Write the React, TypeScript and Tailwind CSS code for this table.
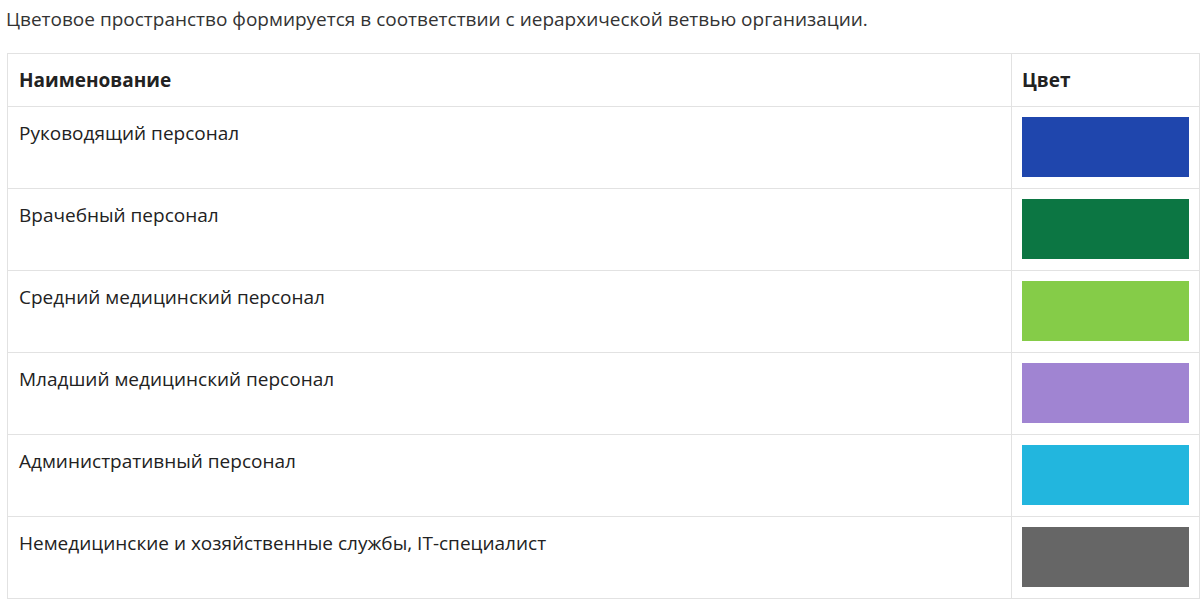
const rows = [
  { name: 'Руководящий персонал', color: 'bg-[#1f46ad]' },
  { name: 'Врачебный персонал', color: 'bg-[#0c7643]' },
  { name: 'Средний медицинский персонал', color: 'bg-[#85cc48]' },
  { name: 'Младший медицинский персонал', color: 'bg-[#a084d2]' },
  { name: 'Административный персонал', color: 'bg-[#22b6de]' },
  { name: 'Немедицинские и хозяйственные службы, IT-специалист', color: 'bg-[#666666]' },
];

export default function App() {
  return (
    <div className="w-[1200px] h-[600px] bg-white pl-[6px] pt-[7px] text-[#222] font-['Open_Sans',sans-serif] overflow-hidden">
      <p className="h-[46px] text-[19px] leading-[24px] text-[#333]">
        Цветовое пространство формируется в соответствии с иерархической ветвью организации.
      </p>
      <div className="ml-px grid grid-cols-[1004px_188px] border-t border-l border-[#e2e2e2]">
        <div className="h-[53px] flex items-center px-[11px] border-r border-b border-[#e2e2e2] text-[19px] font-bold">
          Наименование
        </div>
        <div className="h-[53px] flex items-center px-[10px] border-r border-b border-[#e2e2e2] text-[19px] font-bold">
          Цвет
        </div>
        {rows.map((r) => (
          <div key={r.name} className="contents">
            <div className="h-[82px] px-[11px] pt-[13px] border-r border-b border-[#e2e2e2] text-[19px] leading-[26px]">
              {r.name}
            </div>
            <div className="h-[82px] pl-[10px] pt-[10px] border-r border-b border-[#e2e2e2]">
              <div className={`w-[167px] h-[60px] ${r.color}`} />
            </div>
          </div>
        ))}
      </div>
    </div>
  );
}
